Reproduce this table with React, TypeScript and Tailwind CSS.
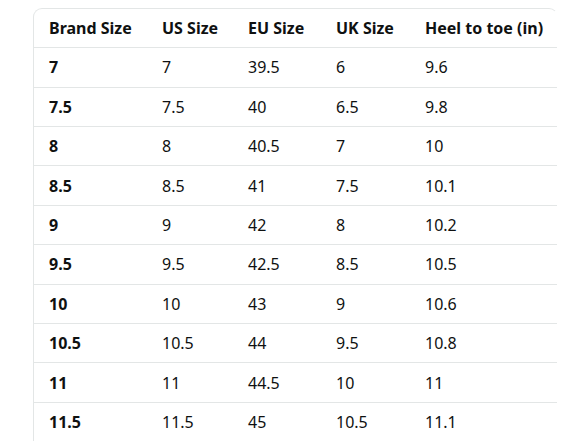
import React from "react";

const headers = ["Brand Size", "US Size", "EU Size", "UK Size", "Heel to toe (in)"];

const rows: string[][] = [
  ["7", "7", "39.5", "6", "9.6"],
  ["7.5", "7.5", "40", "6.5", "9.8"],
  ["8", "8", "40.5", "7", "10"],
  ["8.5", "8.5", "41", "7.5", "10.1"],
  ["9", "9", "42", "8", "10.2"],
  ["9.5", "9.5", "42.5", "8.5", "10.5"],
  ["10", "10", "43", "9", "10.6"],
  ["10.5", "10.5", "44", "9.5", "10.8"],
  ["11", "11", "44.5", "10", "11"],
  ["11.5", "11.5", "45", "10.5", "11.1"],
];

const cols = "grid grid-cols-[113px_86px_88px_89px_148px]";

const App: React.FC = () => {
  return (
    <div className="w-[588px] h-[441px] overflow-hidden bg-white pt-[8px] pl-[33px] font-['Noto_Sans',sans-serif] text-[16px] text-[#0f1111]">
      <div className="w-[525px] rounded-t-[9px] border-t border-l border-r border-[#e3e6e6] border-r-transparent">
        <div className={`${cols} h-[39.3px] border-b border-[#e3e6e6] font-bold items-center`}>
          {headers.map((h) => (
            <div key={h} className="pl-[15px] whitespace-nowrap">
              {h}
            </div>
          ))}
        </div>
        {rows.map((row, i) => (
          <div key={i} className={`${cols} h-[39.4px] border-b border-[#e3e6e6] items-center`}>
            {row.map((cell, j) => (
              <div key={j} className={`pl-[15px] whitespace-nowrap ${j === 0 ? "font-bold" : ""}`}>
                {cell}
              </div>
            ))}
          </div>
        ))}
      </div>
    </div>
  );
};

export default App;
